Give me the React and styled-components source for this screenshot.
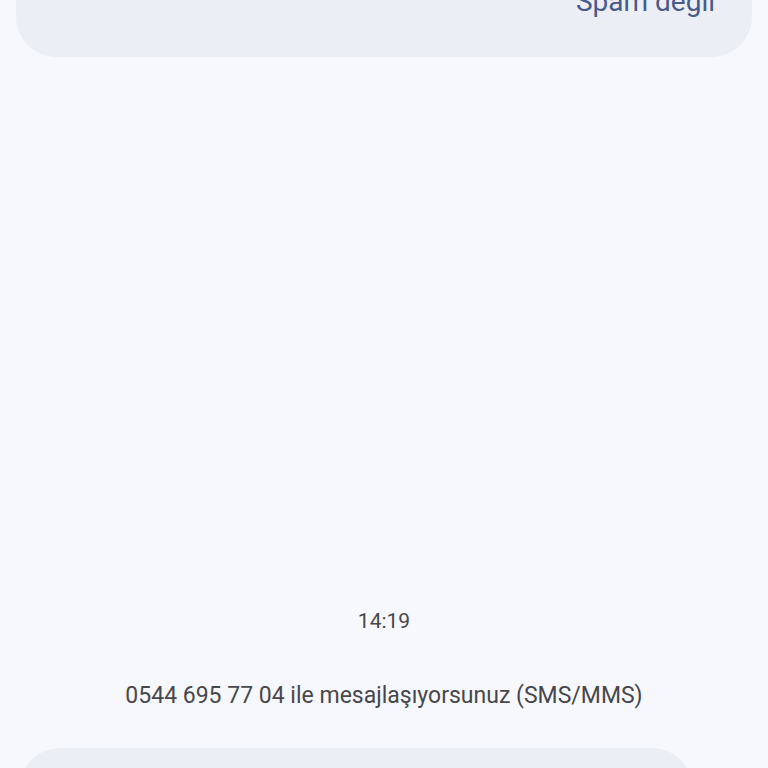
import React from 'react';
import styled, {createGlobalStyle} from 'styled-components';

const GlobalStyle = createGlobalStyle`
  html, body {
    margin: 0;
    padding: 0;
    background: #f7f8fd;
  }
  body {
    font-family: Roboto, "Noto Sans", sans-serif;
  }
`;

const Screen = styled.div`
  height: 768px;
  overflow: hidden;
  display: flex;
  flex-direction: column;
  background: #f7f8fd;
`;

const SpamCard = styled.div`
  margin: -40px 16px 0;
  height: 97px;
  box-sizing: border-box;
  padding: 27px 37px 0 0;
  border-radius: 0 0 40px 40px;
  background: #eceef6;
  display: flex;
  justify-content: flex-end;
  align-items: flex-start;
`;

const TextButton = styled.button`
  border: none;
  background: none;
  padding: 0;
  font-family: Roboto, sans-serif;
  font-size: 28px;
  line-height: 30px;
  color: #475a8c;
  cursor: pointer;
`;

const Thread = styled.div`
  flex: 1;
  display: flex;
  flex-direction: column;
  justify-content: flex-end;
  align-items: center;
  padding-bottom: 40px;
`;

const Timestamp = styled.div`
  font-size: 21px;
  line-height: 24px;
  color: #47474c;
  margin-bottom: 51px;
`;

const Notice = styled.div`
  font-size: 23px;
  line-height: 24px;
  color: #47474c;
`;

const ComposeRow = styled.div`
  display: flex;
  align-items: flex-start;
  padding: 0 76px 0 20px;
  height: 20px;
`;

const ComposeField = styled.div`
  flex: 1;
  height: 80px;
  border-radius: 40px;
  background: #eceef6;
`;

export default function App() {
  return (
    <Screen>
      <GlobalStyle />
      <SpamCard>
        <TextButton>Spam değil</TextButton>
      </SpamCard>
      <Thread>
        <Timestamp>14:19</Timestamp>
        <Notice>0544 695 77 04 ile mesajlaşıyorsunuz (SMS/MMS)</Notice>
      </Thread>
      <ComposeRow>
        <ComposeField />
      </ComposeRow>
    </Screen>
  );
}
